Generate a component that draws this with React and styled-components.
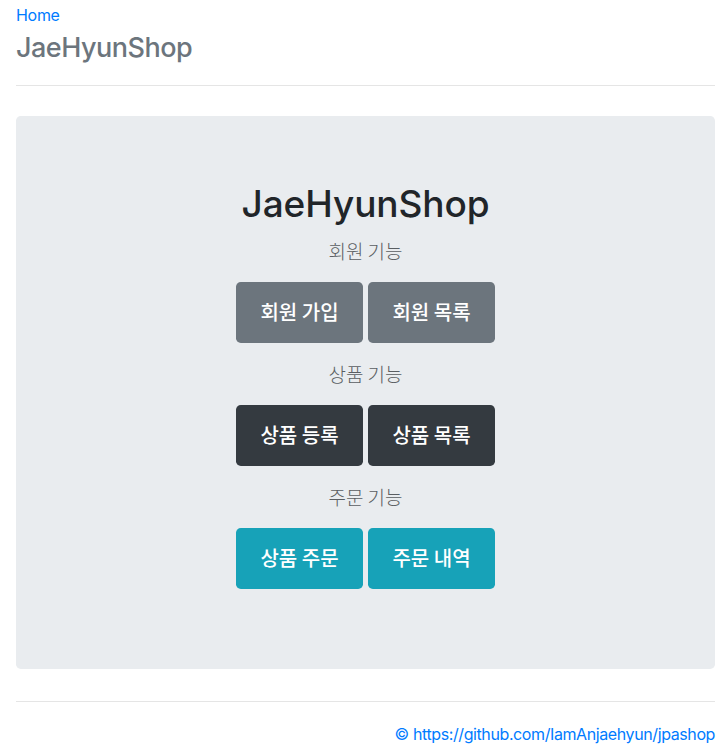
import React from "react";
import styled, { createGlobalStyle } from "styled-components";

const Global = createGlobalStyle`
  html, body { margin: 0; padding: 0; background: #fff; }
  body {
    font-family: Inter, "Liberation Sans", "Noto Sans CJK KR", sans-serif;
    font-size: 16px;
    line-height: 1.5;
    color: #212529;
  }
  * { box-sizing: border-box; }
`;

const Page = styled.div`
  padding: 0 10px 0 16px;
`;

const Header = styled.header`
  padding-top: 3px;
  padding-bottom: 20px;
  border-bottom: 1px solid #e5e5e5;
  margin-bottom: 30px;
`;

const NavLink = styled.a`
  display: block;
  color: #007bff;
  text-decoration: none;
  font-size: 16px;
  line-height: 24px;
  height: 24px;
  margin-bottom: 4px;
  letter-spacing: -0.3px;
`;

const Brand = styled.h3`
  margin: 0;
  font-size: 27px;
  font-weight: 500;
  line-height: 33.6px;
  letter-spacing: -0.5px;
  color: #6c757d;
`;

const Jumbotron = styled.section`
  background: #e9ecef;
  border-radius: 4.8px;
  padding: 64px 32px;
  text-align: center;
`;

const Title = styled.h1`
  margin: 0 0 8px;
  font-size: 37px;
  line-height: 48px;
  font-weight: 500;
  letter-spacing: -0.1px;
  color: #212529;
`;

const Lead = styled.p`
  margin: 0 0 16px;
  font-family: "Noto Sans CJK KR", sans-serif;
  font-size: 19px;
  line-height: 30px;
  font-weight: 300;
  color: #5a5e62;
`;

const ButtonRow = styled.div`
  display: flex;
  justify-content: center;
  gap: 5px;
  margin-bottom: 16px;
`;

const colors = {
  secondary: "#6c757d",
  dark: "#343a40",
  info: "#17a2b8",
};

const Button = styled.a`
  display: flex;
  align-items: center;
  justify-content: center;
  width: 127px;
  height: 61px;
  border-radius: 4.8px;
  background: ${(p) => colors[p.$variant]};
  color: #fff;
  font-family: "Noto Sans CJK KR", sans-serif;
  font-size: 20px;
  font-weight: 500;
  text-decoration: none;
  cursor: pointer;
`;

const Footer = styled.footer`
  margin-top: 32px;
  border-top: 1px solid #e5e5e5;
  padding-top: 20px;
  text-align: right;
`;

const FooterLink = styled.a`
  color: #007bff;
  text-decoration: none;
  font-size: 16px;
  line-height: 24px;
  letter-spacing: -0.4px;
`;

const groups = [
  { label: "회원 기능", variant: "secondary", buttons: ["회원 가입", "회원 목록"] },
  { label: "상품 기능", variant: "dark", buttons: ["상품 등록", "상품 목록"] },
  { label: "주문 기능", variant: "info", buttons: ["상품 주문", "주문 내역"] },
];

export default function App() {
  return (
    <>
      <Global />
      <Page>
        <Header>
          <NavLink href="#">Home</NavLink>
          <Brand>JaeHyunShop</Brand>
        </Header>
        <Jumbotron>
          <Title>JaeHyunShop</Title>
          {groups.map((g) => (
            <React.Fragment key={g.label}>
              <Lead>{g.label}</Lead>
              <ButtonRow>
                {g.buttons.map((b) => (
                  <Button key={b} $variant={g.variant} href="#">
                    {b}
                  </Button>
                ))}
              </ButtonRow>
            </React.Fragment>
          ))}
        </Jumbotron>
        <Footer>
          <FooterLink href="#">© https://github.com/IamAnjaehyun/jpashop</FooterLink>
        </Footer>
      </Page>
    </>
  );
}
